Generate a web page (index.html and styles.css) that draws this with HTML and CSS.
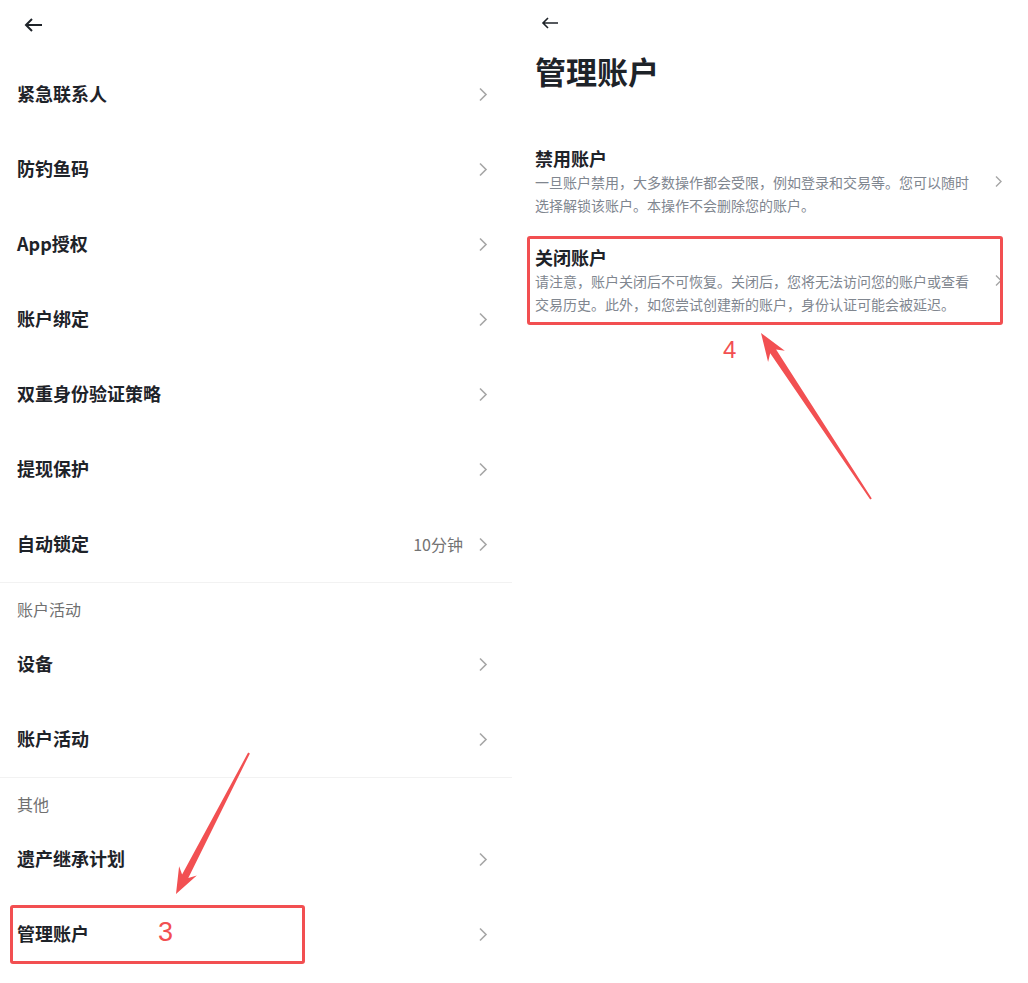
FILE: index.html
```html
<!DOCTYPE html>
<html lang="zh-CN">
<head>
<meta charset="utf-8">
<title>管理账户</title>
<link rel="stylesheet" href="styles.css">
</head>
<body>
<div class="page">
  <div class="panel left">
    <div class="topbar">
      <svg class="back" width="20" height="16" viewBox="0 0 20 16"><path d="M18 8H2M8 2L2 8l6 6" fill="none" stroke="#1e2329" stroke-width="2" stroke-linejoin="miter"/></svg>
    </div>
    <div class="row"><span class="label">紧急联系人</span><svg class="chev" width="10" height="15" viewBox="0 0 10 15"><path d="M2 1.5l6 6-6 6" fill="none" stroke="#a6a6a6" stroke-width="1.6"/></svg></div>
    <div class="row"><span class="label">防钓鱼码</span><svg class="chev" width="10" height="15" viewBox="0 0 10 15"><path d="M2 1.5l6 6-6 6" fill="none" stroke="#a6a6a6" stroke-width="1.6"/></svg></div>
    <div class="row"><span class="label">App授权</span><svg class="chev" width="10" height="15" viewBox="0 0 10 15"><path d="M2 1.5l6 6-6 6" fill="none" stroke="#a6a6a6" stroke-width="1.6"/></svg></div>
    <div class="row"><span class="label">账户绑定</span><svg class="chev" width="10" height="15" viewBox="0 0 10 15"><path d="M2 1.5l6 6-6 6" fill="none" stroke="#a6a6a6" stroke-width="1.6"/></svg></div>
    <div class="row"><span class="label">双重身份验证策略</span><svg class="chev" width="10" height="15" viewBox="0 0 10 15"><path d="M2 1.5l6 6-6 6" fill="none" stroke="#a6a6a6" stroke-width="1.6"/></svg></div>
    <div class="row"><span class="label">提现保护</span><svg class="chev" width="10" height="15" viewBox="0 0 10 15"><path d="M2 1.5l6 6-6 6" fill="none" stroke="#a6a6a6" stroke-width="1.6"/></svg></div>
    <div class="row"><span class="label">自动锁定</span><span class="value">10分钟</span><svg class="chev" width="10" height="15" viewBox="0 0 10 15"><path d="M2 1.5l6 6-6 6" fill="none" stroke="#a6a6a6" stroke-width="1.6"/></svg></div>
    <div class="section">账户活动</div>
    <div class="row"><span class="label">设备</span><svg class="chev" width="10" height="15" viewBox="0 0 10 15"><path d="M2 1.5l6 6-6 6" fill="none" stroke="#a6a6a6" stroke-width="1.6"/></svg></div>
    <div class="row"><span class="label">账户活动</span><svg class="chev" width="10" height="15" viewBox="0 0 10 15"><path d="M2 1.5l6 6-6 6" fill="none" stroke="#a6a6a6" stroke-width="1.6"/></svg></div>
    <div class="section">其他</div>
    <div class="row"><span class="label">遗产继承计划</span><svg class="chev" width="10" height="15" viewBox="0 0 10 15"><path d="M2 1.5l6 6-6 6" fill="none" stroke="#a6a6a6" stroke-width="1.6"/></svg></div>
    <div class="row"><span class="label">管理账户</span><svg class="chev" width="10" height="15" viewBox="0 0 10 15"><path d="M2 1.5l6 6-6 6" fill="none" stroke="#a6a6a6" stroke-width="1.6"/></svg></div>
  </div>

  <div class="panel right">
    <div class="topbar-r">
      <svg class="back-r" width="18" height="14" viewBox="0 0 18 14"><path d="M17 7H2M7 2L2 7l5 5" fill="none" stroke="#1e2329" stroke-width="1.6"/></svg>
    </div>
    <h1 class="title">管理账户</h1>
    <div class="acct-list">
      <div class="acct-row">
        <div class="acct-text">
          <div class="acct-title">禁用账户</div>
          <div class="acct-desc">一旦账户禁用，大多数操作都会受限，例如登录和交易等。您可以随时选择解锁该账户。本操作不会删除您的账户。</div>
        </div>
        <svg class="chev-r" width="9" height="13" viewBox="0 0 9 13"><path d="M2 1.5l5 5-5 5" fill="none" stroke="#a6a6a6" stroke-width="1.4"/></svg>
      </div>
      <div class="acct-row">
        <div class="acct-text">
          <div class="acct-title">关闭账户</div>
          <div class="acct-desc">请注意，账户关闭后不可恢复。关闭后，您将无法访问您的账户或查看交易历史。此外，如您尝试创建新的账户，身份认证可能会被延迟。</div>
        </div>
        <svg class="chev-r" width="9" height="13" viewBox="0 0 9 13"><path d="M2 1.5l5 5-5 5" fill="none" stroke="#a6a6a6" stroke-width="1.4"/></svg>
      </div>
    </div>
  </div>

  <div class="mark mark-left"></div>
  <div class="step step-3">3</div>
  <div class="mark mark-right"></div>
  <div class="step step-4">4</div>
  <svg class="arrows" width="1028" height="983" viewBox="0 0 1028 983">
    <polygon fill="#f25052" points="249.9,753.4 188.3,877.9 196.8,875.5 176,894 179.1,866.3 182.1,874.6 248.1,752.6"/>
    <polygon fill="#f25052" points="871.8,498.5 776.1,349.4 784.8,350.8 761,333 768.1,361.9 770.2,353.3 870.2,499.5"/>
  </svg>
</div>
</body>
</html>
```

FILE: styles.css
```css
* { box-sizing: border-box; }
html, body { margin: 0; padding: 0; background: #ffffff; }
body {
  font-family: "Noto Sans CJK SC", "Noto Sans", sans-serif;
  color: #1e2329;
}
.page {
  position: relative;
  width: 1028px;
  height: 983px;
  display: flex;
  overflow: hidden;
}
.panel.left { width: 512px; }
.panel.right { flex: 1; padding-left: 23px; }

.topbar { height: 57px; padding: 17px 0 0 24px; }
.back { display: block; }

.row {
  height: 75px;
  display: flex;
  align-items: center;
  padding: 0 24px 0 17px;
}
.label { flex: 1; font-size: 18px; font-weight: 700; line-height: 26px; margin-bottom: 3px; }
.value { font-size: 16px; color: #737373; margin-right: 15px; line-height: 22px; margin-bottom: 2px; }
.chev { display: block; }

.section {
  border-top: 1px solid #f2f2f2;
  padding: 15px 0 7px 17px;
  font-size: 16px;
  line-height: 22px;
  color: #707070;
}

.topbar-r { height: 46px; padding: 16px 0 0 6px; }
.back-r { display: block; }
.title { margin: 3px 0 0 0; font-size: 31px; line-height: 44px; font-weight: 700; }

.acct-list { margin-top: 40px; }
.acct-row {
  display: flex;
  align-items: center;
  padding: 13px 25px 15px 0;
}
.acct-text { width: 440px; }
.acct-title { font-size: 18px; font-weight: 700; line-height: 25px; }
.acct-desc { font-size: 14px; line-height: 23px; color: #80868f; }
.chev-r { display: block; margin-left: auto; }

.mark {
  position: absolute;
  border: 3px solid #f24f51;
  border-radius: 3px;
}
.mark-left { left: 10px; top: 905px; width: 295px; height: 59px; }
.mark-right { left: 527px; top: 236px; width: 476px; height: 89px; }

.step {
  position: absolute;
  font-family: "Liberation Sans", sans-serif;
  color: #f24f51;
  line-height: 1;
}
.step-3 { left: 158px; top: 919px; font-size: 27px; }
.step-4 { left: 723px; top: 338px; font-size: 24px; }

.arrows { position: absolute; left: 0; top: 0; pointer-events: none; }
```
